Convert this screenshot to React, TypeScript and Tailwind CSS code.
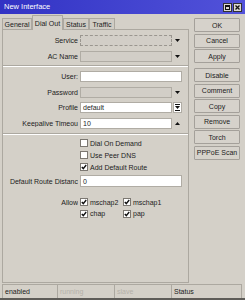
import React from 'react';

const Arrow = ({ up }: { up?: boolean }) => (
  <svg width="5" height="3" viewBox="0 0 5 3" className="block">
    <path d={up ? 'M0 3 L5 3 L2.5 0 Z' : 'M0 0 L5 0 L2.5 3 Z'} fill="#111" />
  </svg>
);

const ProfileIcon = () => (
  <svg width="5" height="7" viewBox="0 0 5 7" className="block">
    <rect x="0" y="0" width="5" height="1" fill="#111" />
    <path d="M0 2 L5 2 L2.5 5 Z" fill="#111" />
    <rect x="0" y="6" width="5" height="1" fill="#111" />
  </svg>
);

const Check = ({ checked }: { checked?: boolean }) => (
  <div className="w-[8px] h-[8px] shrink-0 bg-white border border-[#7c7872] flex items-center justify-center">
    {checked && (
      <svg width="6" height="6" viewBox="0 0 6 6" className="block">
        <path d="M0.8 3 L2.3 4.6 L5.2 1" stroke="#111" strokeWidth="1.4" fill="none" />
      </svg>
    )}
  </div>
);

const Label = ({ children }: { children: React.ReactNode }) => (
  <span className="w-[75px] shrink-0 text-right whitespace-nowrap overflow-hidden leading-none">
    {children}
  </span>
);

const Separator = () => (
  <div className="h-[2px] border-t border-[#aca8a0] border-b border-b-white" />
);

const Btn = ({ children, className = '' }: { children: React.ReactNode; className?: string }) => (
  <div
    className={`h-[14px] shrink-0 flex items-center justify-center border border-[#a4a09a] rounded-[1px] bg-[#d6d2cb] leading-none ${className}`}
  >
    {children}
  </div>
);

const Tab = ({ label, active, w }: { label: string; active?: boolean; w: string }) => (
  <div
    className={`${w} flex items-center justify-center leading-none border border-[#aca8a0] border-b-0 ${
      active ? 'h-[15px] -mb-px z-10 bg-[#d4d0c8] rounded-t-[1px]' : 'h-[11px] bg-[#d0ccc4]'
    }`}
  >
    {label}
  </div>
);

export default function App() {
  return (
    <div className="w-[245px] h-[300px] bg-[#d4d0c8] flex flex-col overflow-hidden text-[7px] text-[#1c1c1c] font-['Liberation_Sans',Arial,sans-serif]">
      {/* Title bar */}
      <div className="h-[14px] shrink-0 flex items-center justify-between pl-[4px] pr-[3px] bg-gradient-to-r from-[#3232c4] to-[#5252da]">
        <span className="text-white text-[7.5px] leading-none">New Interface</span>
        <div className="flex gap-[1px]">
          <div className="w-[9px] h-[9px] bg-[#dcd8d2] border border-[#333] flex items-center justify-center">
            <div className="w-[5px] h-[5px] border border-[#111] border-t-2" />
          </div>
          <div className="w-[9px] h-[9px] bg-[#dcd8d2] border border-[#333] flex items-center justify-center">
            <svg width="5" height="5" viewBox="0 0 5 5" className="block">
              <path d="M0.5 0.5 L4.5 4.5 M4.5 0.5 L0.5 4.5" stroke="#111" strokeWidth="1.3" />
            </svg>
          </div>
        </div>
      </div>

      {/* Main */}
      <div className="h-[269px] shrink-0 flex">
        <div className="w-[187px] ml-[2px] flex flex-col">
          <div className="h-[15px] flex items-end">
            <Tab label="General" w="w-[30px]" />
            <Tab label="Dial Out" w="w-[31px]" active />
            <Tab label="Status" w="w-[26px]" />
            <Tab label="Traffic" w="w-[26px]" />
          </div>
          <div className="h-[254px] border border-[#aca8a0] flex flex-col pt-[2px]">
            <div className="flex items-center h-[16px]">
              <Label>Service</Label>
              <div className="ml-[2px] w-[102px] flex items-center">
                <div className="flex-1 h-[11px] border border-dashed border-[#9a968f] bg-[#d2cec7]" />
                <div className="w-[10px] flex justify-center">
                  <Arrow />
                </div>
              </div>
            </div>
            <div className="flex items-center h-[16px]">
              <Label>AC Name</Label>
              <div className="ml-[2px] w-[102px] flex items-center">
                <div className="flex-1 h-[11px] border border-[#b0aca4] bg-[#d2cec7]" />
                <div className="w-[10px] flex justify-center">
                  <Arrow />
                </div>
              </div>
            </div>
            <div className="mt-[1px]">
              <Separator />
            </div>
            <div className="h-[2px]" />
            <div className="flex items-center h-[15.5px]">
              <Label>User:</Label>
              <div className="ml-[2px] w-[102px] h-[11px] border border-[#b0aca4] bg-white" />
            </div>
            <div className="flex items-center h-[15.5px]">
              <Label>Password</Label>
              <div className="ml-[2px] w-[102px] flex items-center">
                <div className="flex-1 h-[11px] border border-[#b0aca4] bg-[#d2cec7]" />
                <div className="w-[10px] flex justify-center">
                  <Arrow />
                </div>
              </div>
            </div>
            <div className="flex items-center h-[15.5px]">
              <Label>Profile</Label>
              <div className="ml-[2px] w-[102px] flex items-center">
                <div className="flex-1 h-[11px] border border-[#b0aca4] bg-white flex items-center px-[2px] leading-none">
                  default
                </div>
                <div className="w-[9px] h-[11px] ml-[1px] border border-[#b0aca4] bg-white flex items-center justify-center">
                  <ProfileIcon />
                </div>
              </div>
            </div>
            <div className="flex items-center h-[15.5px]">
              <Label>Keepalive Timeou</Label>
              <div className="ml-[2px] w-[102px] flex items-center">
                <div className="flex-1 h-[11px] border border-[#b0aca4] bg-white flex items-center px-[2px] leading-none">
                  10
                </div>
                <div className="w-[10px] flex justify-center">
                  <Arrow up />
                </div>
              </div>
            </div>
            <div className="mt-[2px]">
              <Separator />
            </div>
            <div className="h-[2px]" />
            {['Dial On Demand', 'Use Peer DNS', 'Add Default Route'].map((t, i) => (
              <div key={t} className="flex items-center h-[12px] pl-[77px] gap-[2px]">
                <Check checked={i === 2} />
                <span className="leading-none whitespace-nowrap">{t}</span>
              </div>
            ))}
            <div className="flex items-center h-[16px]">
              <Label>Default Route Distanc</Label>
              <div className="ml-[2px] w-[102px] h-[12px] border border-[#b0aca4] bg-white flex items-center px-[2px] leading-none">
                0
              </div>
            </div>
            <div className="h-[7px]" />
            <div className="flex items-center h-[12px]">
              <Label>Allow</Label>
              <div className="ml-[2px] w-[43px] flex items-center gap-[2px]">
                <Check checked />
                <span className="leading-none">mschap2</span>
              </div>
              <div className="flex items-center gap-[2px]">
                <Check checked />
                <span className="leading-none">mschap1</span>
              </div>
            </div>
            <div className="flex items-center h-[11px]">
              <span className="w-[75px] shrink-0" />
              <div className="ml-[2px] w-[43px] flex items-center gap-[2px]">
                <Check checked />
                <span className="leading-none">chap</span>
              </div>
              <div className="flex items-center gap-[2px]">
                <Check checked />
                <span className="leading-none">pap</span>
              </div>
            </div>
          </div>
        </div>

        {/* Right buttons */}
        <div className="w-[46px] ml-[5px] pt-[4px] flex flex-col gap-[1.5px]">
          <Btn>OK</Btn>
          <Btn>Cancel</Btn>
          <Btn>Apply</Btn>
          <Btn className="mt-[3.5px]">Disable</Btn>
          <Btn>Comment</Btn>
          <Btn>Copy</Btn>
          <Btn>Remove</Btn>
          <Btn>Torch</Btn>
          <Btn>PPPoE Scan</Btn>
        </div>
      </div>

      {/* Status bar */}
      <div className="mt-[1px] ml-[2px] w-[240px] h-[14px] shrink-0 flex border-t border-[#aca8a0]">
        <div className="w-[56px] border-l border-r border-[#aca8a0] flex items-center px-[2px] leading-none">enabled</div>
        <div className="w-[57px] border-r border-[#aca8a0] flex items-center px-[2px] leading-none text-[#b4b0a8]">running</div>
        <div className="w-[57px] border-r border-[#aca8a0] flex items-center px-[2px] leading-none text-[#b4b0a8]">slave</div>
        <div className="flex-1 border-r border-[#aca8a0] flex items-center px-[2px] leading-none">Status</div>
      </div>
      <div className="h-[2px] shrink-0 bg-[#5e5c58]" />
    </div>
  );
}
